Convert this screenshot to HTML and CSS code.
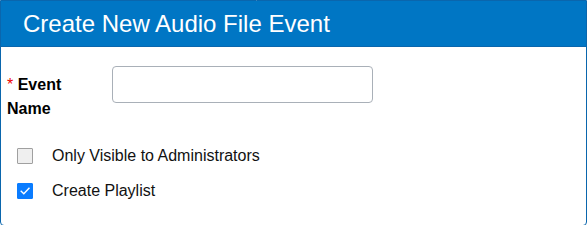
FILE: index.html
```html
<!DOCTYPE html>
<html>
<head>
<meta charset="utf-8">
<link rel="stylesheet" href="styles.css">
</head>
<body>
<div class="panel">
  <div class="panel-header">Create New Audio File Event</div>
  <div class="panel-body">
    <div class="form-row">
      <label class="field-label"><span class="req">*</span> Event Name</label>
      <input class="text-input" type="text">
    </div>
    <div class="check-list">
      <div class="check-row">
        <span class="box"></span>
        <span class="check-label">Only Visible to Administrators</span>
      </div>
      <div class="check-row">
        <span class="box checked">
          <svg width="12" height="12" viewBox="0 0 12 12"><path d="M2.2 6.3 L4.8 8.8 L10 3.2" fill="none" stroke="#fff" stroke-width="1.4" stroke-linecap="square"/></svg>
        </span>
        <span class="check-label">Create Playlist</span>
      </div>
    </div>
  </div>
</div>
</body>
</html>
```
FILE: styles.css
```css
html, body {
  margin: 0;
  padding: 0;
  background: #fff;
  font-family: "Liberation Sans", Arial, sans-serif;
  height: 225px;
  overflow: hidden;
}
.panel {
  width: 585px;
  height: 224px;
  border: 1px solid #0a66ad;
  border-radius: 0 0 4px 4px;
  overflow: hidden;
}
.panel-header {
  height: 45px;
  line-height: 45px;
  background: #0076c4;
  border-bottom: 1px solid #0a66ad;
  color: #fff;
  font-size: 24px;
  padding-left: 22px;
}
.panel-body {
  padding: 19px 0 0 6px;
}
.form-row {
  display: flex;
  align-items: flex-start;
}
.field-label {
  width: 105px;
  font-size: 16px;
  font-weight: bold;
  line-height: 24px;
  color: #000;
  padding-top: 7px;
  padding-right: 25px;
  box-sizing: border-box;
}
.req {
  color: #e00;
  font-weight: normal;
}
.text-input {
  width: 261px;
  height: 37px;
  box-sizing: border-box;
  border: 1px solid #a9b0b8;
  border-radius: 4px;
  margin: 0;
  padding: 0 8px;
}
.check-list {
  padding-top: 27px;
  padding-left: 10px;
  display: flex;
  flex-direction: column;
  gap: 19px;
}
.check-row {
  display: flex;
  align-items: center;
  height: 16px;
}
.box {
  width: 14px;
  height: 14px;
  border: 1px solid #a0a0a0;
  background: #efefef;
  border-radius: 1px;
  display: flex;
  align-items: center;
  justify-content: center;
}
.box.checked {
  background: #0a7cff;
  border-color: #0a7cff;
}
.check-label {
  margin-left: 19px;
  font-size: 16px;
  color: #111;
}
```
